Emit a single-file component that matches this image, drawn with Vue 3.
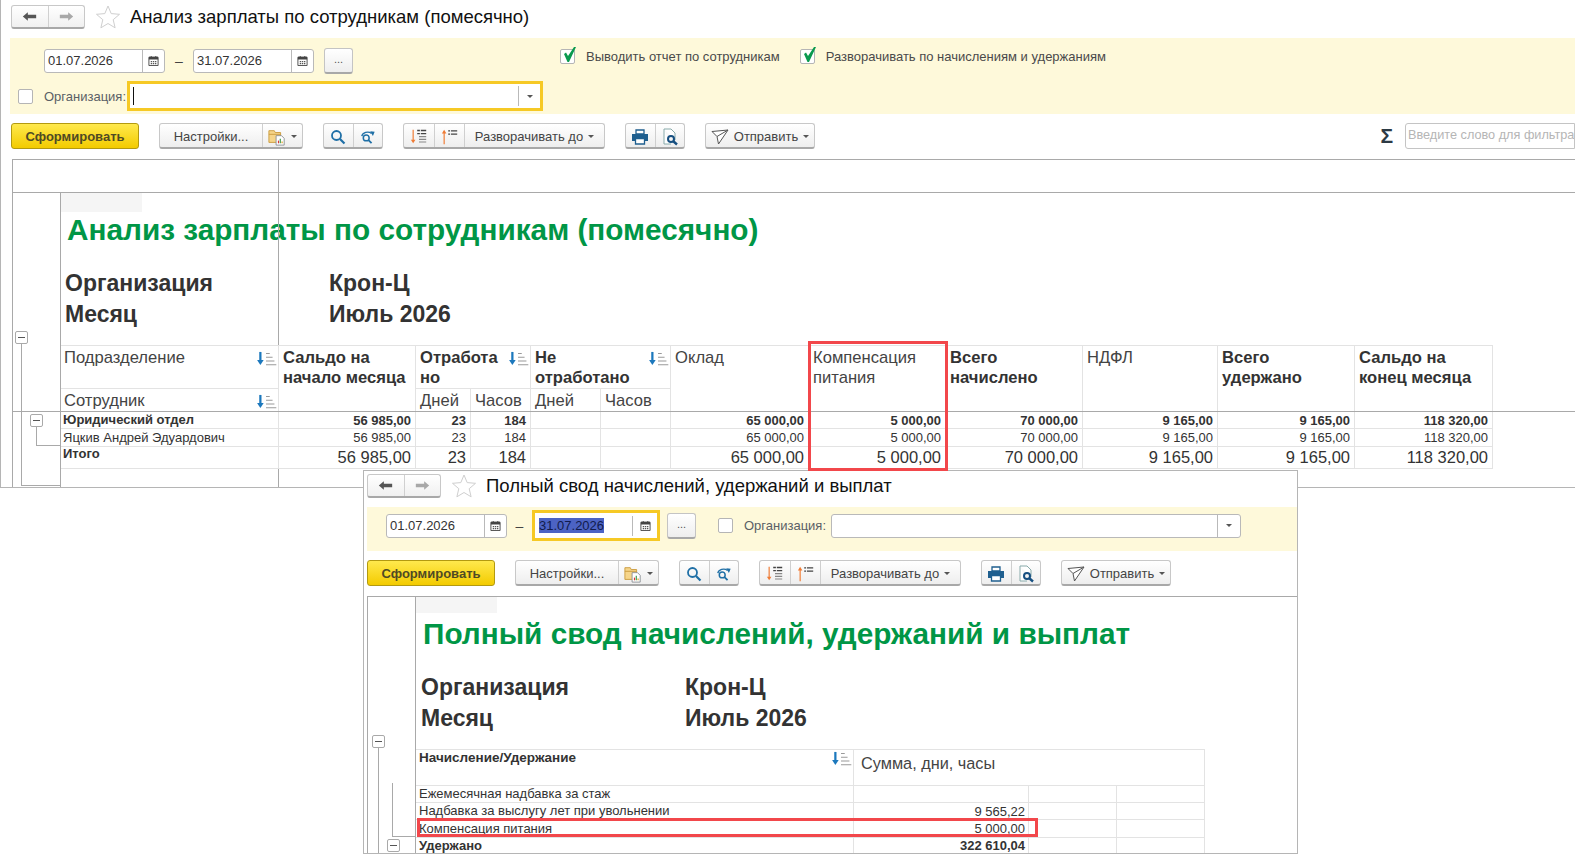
<script setup>
const windows = [
  { id: 'salary', title: 'Анализ зарплаты по сотрудникам (помесячно)' },
  { id: 'summary', title: 'Полный свод начислений, удержаний и выплат' }
]

const amounts = ['65 000,00', '5 000,00', '70 000,00', '9 165,00', '9 165,00', '118 320,00']

const salaryRows = [
  { name: 'Юридический отдел', cls: 'row-group' },
  { name: 'Яцкив Андрей Эдуардович', cls: 'row-item' },
  { name: 'Итого', cls: 'row-total' }
]

const summaryRows = [
  { name: 'Ежемесячная надбавка за стаж', sum: '', cls: 'row-a' },
  { name: 'Надбавка за выслугу лет при увольнении', sum: '9 565,22', cls: 'row-a' },
  { name: 'Компенсация питания', sum: '5 000,00', cls: 'row-b' },
  { name: 'Удержано', sum: '322 610,04', cls: 'row-c' }
]
</script>

<template>
  <svg class="sprite" aria-hidden="true">
    <symbol id="i-back" viewBox="0 0 18 12"><path d="M1 6l6-5v3h10v4H7v3z" /></symbol>
    <symbol id="i-star" viewBox="0 0 26 26">
      <path d="M13 2l3.2 7.6 8.3.7-6.3 5.4 1.9 8.1-7.1-4.3-7.1 4.3 1.9-8.1-6.3-5.4 8.3-.7z" fill="#fff" stroke="#cfcfcf" />
    </symbol>
    <symbol id="i-cal" viewBox="0 0 12 12">
      <path d="M1 2.5h10v9H1z" fill="#fff" stroke="#444" />
      <path d="M1 2h10v3H1zM3 1h1v2H3zM8 1h1v2H8z" fill="#444" />
      <path d="M3 6.5h1.5V8H3zM5.3 6.5h1.5V8H5.3zM7.6 6.5h1.5V8H7.6zM3 8.8h1.5v1.4H3zM5.3 8.8h1.5v1.4H5.3zM7.6 8.8h1.5v1.4H7.6z" fill="#555" />
    </symbol>
    <symbol id="i-check" viewBox="0 0 16 16"><path d="M3 7l2-1.500 2 3.500 6-9h2L8 15H6.500z" fill="#0a9a4e" /></symbol>
    <symbol id="i-folder" viewBox="0 0 20 20">
      <path d="M1 3h6l1 2h6v11H1z" fill="#f6d58a" stroke="#c99a3c" />
      <path d="M1 7h13" stroke="#c99a3c" />
      <path d="M9 8.500h6l3 3v7.500H9z" fill="#fff" stroke="#8a8f94" />
      <path d="M11 14h1.300v3H11z" fill="#d33" />
      <path d="M13 12h1.300v5H13z" fill="#3a9a4a" />
      <path d="M15 15h1.300v2H15z" fill="#e0a020" />
    </symbol>
    <symbol id="i-search" viewBox="0 0 16 16">
      <circle cx="6.500" cy="6.500" r="4.500" fill="none" stroke="#1f6fa6" stroke-width="1.800" />
      <path d="M10 10l4.500 4.500" stroke="#1f6fa6" stroke-width="2.200" />
    </symbol>
    <symbol id="i-research" viewBox="0 0 18 16">
      <circle cx="7" cy="9" r="3.300" fill="none" stroke="#1f6fa6" stroke-width="1.700" />
      <path d="M9.500 11.500l3.500 3.500" stroke="#1f6fa6" stroke-width="2" />
      <path d="M2 7c1-4 7-6 11-3" fill="none" stroke="#1f6fa6" stroke-width="1.500" />
      <path d="M11.500 1.500l5 .5-2 5z" fill="#1f6fa6" />
    </symbol>
    <symbol id="i-expand-down" viewBox="0 0 20 18">
      <path d="M3.500 1v13" stroke="#ef7b35" stroke-width="1.300" />
      <path d="M1 12h5l-2.500 4z" fill="#ef7b35" />
      <path d="M8 1h3v1.500H8zM12 1h6v1.500h-6zM8 4.500h3V6H8zM12 4.500h6V6h-6z" fill="#444" />
      <path d="M10 8h8v1.200h-8zM10 11h8v1.200h-8zM10 14h8v1.200h-8z" fill="#888" />
    </symbol>
    <symbol id="i-expand-up" viewBox="0 0 20 18">
      <path d="M3.500 3v14" stroke="#ef7b35" stroke-width="1.300" />
      <path d="M1 5h5L3.500 1z" fill="#ef7b35" />
      <path d="M8 1.500h2V3H8zM11 1.500h7V3h-7zM8 5h2v1.500H8zM11 5h7v1.500h-7z" fill="#444" />
    </symbol>
    <symbol id="i-print" viewBox="0 0 18 16">
      <path d="M5 1h8v4H5z" fill="#fff" stroke="#1f5f8f" stroke-width="1.300" />
      <path d="M1 5h16v7h-3V9H4v3H1z" fill="#1f5f8f" />
      <path d="M4.500 9.500h9v5.500h-9z" fill="#fff" stroke="#1f5f8f" stroke-width="1.300" />
    </symbol>
    <symbol id="i-preview" viewBox="0 0 18 18">
      <path d="M3 1h7l4 4v7M3 1v15h7" fill="#fff" stroke="#8aa" />
      <circle cx="10" cy="11" r="3" fill="none" stroke="#164f80" stroke-width="2" />
      <path d="M12 13l4 3.500" stroke="#164f80" stroke-width="2.400" />
    </symbol>
    <symbol id="i-send" viewBox="0 0 18 16">
      <path d="M1 2.500L17 1l-9.500 14L6 7.500zM6 7.500L17 1" fill="#fff" stroke="#555" />
    </symbol>
    <symbol id="i-sort" viewBox="0 0 22 16">
      <path d="M5 1v10" stroke="#1c78bd" stroke-width="2.400" />
      <path d="M1.500 9.500h7L5 15z" fill="#1c78bd" />
      <path d="M11 2h4v1.300h-4zM11 6h7v1.300h-7zM11 10h9v1.300h-9zM11 14h11v1.300H11z" fill="#9a9a9a" />
    </symbol>
  </svg>

  <div class="desktop">
    <section v-for="win in windows" :key="win.id" class="window" :class="win.id">
      <header class="head">
        <div class="nav">
          <button class="nav-btn"><svg class="nav-ico back"><use href="#i-back" /></svg></button>
          <button class="nav-btn"><svg class="nav-ico fwd"><use href="#i-back" /></svg></button>
        </div>
        <svg class="star"><use href="#i-star" /></svg>
        <h1 class="title">{{ win.title }}</h1>
      </header>

      <div v-if="win.id === 'salary'" class="panel">
        <div class="panel-row">
          <div class="date">
            <span class="date-val">01.07.2026</span>
            <span class="date-btn"><svg class="cal"><use href="#i-cal" /></svg></span>
          </div>
          <span class="dash">–</span>
          <div class="date">
            <span class="date-val">31.07.2026</span>
            <span class="date-btn"><svg class="cal"><use href="#i-cal" /></svg></span>
          </div>
          <button class="more">...</button>
          <label class="check first-check">
            <span class="box"><svg class="tick"><use href="#i-check" /></svg></span>
            Выводить отчет по сотрудникам
          </label>
          <label class="check second-check">
            <span class="box"><svg class="tick"><use href="#i-check" /></svg></span>
            Разворачивать по начислениям и удержаниям
          </label>
        </div>
        <div class="panel-row org-row">
          <span class="box"></span>
          <span class="org-label">Организация:</span>
          <div class="org-input focused">
            <span class="cursor"></span>
            <span class="org-btn"><i class="caret"></i></span>
          </div>
        </div>
      </div>

      <div v-else class="panel">
        <div class="panel-row">
          <div class="date">
            <span class="date-val">01.07.2026</span>
            <span class="date-btn"><svg class="cal"><use href="#i-cal" /></svg></span>
          </div>
          <span class="dash">–</span>
          <div class="date focused">
            <span class="date-val"><mark class="selected">31.07.2026</mark></span>
            <span class="date-btn"><svg class="cal"><use href="#i-cal" /></svg></span>
          </div>
          <button class="more">...</button>
          <span class="box org-box"></span>
          <span class="org-label">Организация:</span>
          <div class="org-input">
            <span class="org-btn"><i class="caret"></i></span>
          </div>
        </div>
      </div>

      <div class="toolbar">
        <button class="btn primary">Сформировать</button>
        <div class="group settings">
          <button class="seg grow">Настройки...</button>
          <button class="seg folder-seg"><svg class="ico18"><use href="#i-folder" /></svg><i class="caret"></i></button>
        </div>
        <div class="group">
          <button class="seg ico-seg"><svg class="ico16"><use href="#i-search" /></svg></button>
          <button class="seg ico-seg"><svg class="ico16"><use href="#i-research" /></svg></button>
        </div>
        <div class="group expand">
          <button class="seg ico-seg"><svg class="ico18"><use href="#i-expand-down" /></svg></button>
          <button class="seg ico-seg"><svg class="ico18"><use href="#i-expand-up" /></svg></button>
          <button class="seg grow">Разворачивать до <i class="caret"></i></button>
        </div>
        <div class="group">
          <button class="seg ico-seg"><svg class="ico18"><use href="#i-print" /></svg></button>
          <button class="seg ico-seg"><svg class="ico18"><use href="#i-preview" /></svg></button>
        </div>
        <div class="group send">
          <button class="seg grow"><svg class="ico18"><use href="#i-send" /></svg> Отправить <i class="caret"></i></button>
        </div>
        <template v-if="win.id === 'salary'">
          <span class="sigma">Σ</span>
          <div class="filter">Введите слово для фильтра</div>
        </template>
      </div>

      <div class="report">
        <div v-if="win.id === 'salary'" class="report-top"></div>
        <div class="report-body">
          <div class="gutter"></div>
          <div class="sheet">
            <div class="stub"></div>
            <h2 class="sheet-title">{{ win.title }}</h2>
            <dl class="meta">
              <dt>Организация</dt><dd>Крон-Ц</dd>
              <dt>Месяц</dt><dd>Июль 2026</dd>
            </dl>

            <table v-if="win.id === 'salary'" class="grid salary-grid">
              <colgroup>
                <col class="w218" /><col class="w137" /><col class="w55" /><col class="w60" /><col class="w70" /><col class="w70" />
                <col class="w138" /><col class="w137" /><col class="w137" /><col class="w135" /><col class="w137" /><col class="w138" />
              </colgroup>
              <thead>
                <tr class="head-a">
                  <th class="first"><div class="sortable">Подразделение<svg class="sort"><use href="#i-sort" /></svg></div></th>
                  <th rowspan="2" class="strong">Сальдо на<br />начало месяца</th>
                  <th colspan="2" class="strong"><div class="sortable">Отработа<svg class="sort"><use href="#i-sort" /></svg></div>но</th>
                  <th colspan="2" class="strong"><div class="sortable">Не<svg class="sort"><use href="#i-sort" /></svg></div>отработано</th>
                  <th rowspan="2">Оклад</th>
                  <th rowspan="2">Компенсация<br />питания</th>
                  <th rowspan="2" class="strong">Всего<br />начислено</th>
                  <th rowspan="2">НДФЛ</th>
                  <th rowspan="2" class="strong">Всего<br />удержано</th>
                  <th rowspan="2" class="strong">Сальдо на<br />конец месяца</th>
                </tr>
                <tr class="head-b">
                  <th class="first"><div class="sortable">Сотрудник<svg class="sort"><use href="#i-sort" /></svg></div></th>
                  <th>Дней</th><th>Часов</th><th>Дней</th><th>Часов</th>
                </tr>
              </thead>
              <tbody>
                <tr v-for="row in salaryRows" :key="row.name" :class="row.cls">
                  <td class="name">{{ row.name }}</td>
                  <td class="num">56 985,00</td>
                  <td class="num">23</td>
                  <td class="num">184</td>
                  <td></td>
                  <td></td>
                  <td v-for="(a, i) in amounts" :key="i" class="num">{{ a }}</td>
                </tr>
              </tbody>
            </table>

            <table v-else class="grid summary-grid">
              <colgroup>
                <col class="w438" /><col class="w175" /><col class="w88" /><col class="w88" />
              </colgroup>
              <thead>
                <tr class="head-s">
                  <th class="strong small"><div class="sortable">Начисление/Удержание<svg class="sort"><use href="#i-sort" /></svg></div></th>
                  <th colspan="3" class="amount-head">Сумма, дни, часы</th>
                </tr>
              </thead>
              <tbody>
                <tr v-for="row in summaryRows" :key="row.name" :class="row.cls">
                  <td class="name">{{ row.name }}</td>
                  <td class="num">{{ row.sum }}</td>
                  <td></td>
                  <td></td>
                </tr>
              </tbody>
            </table>
          </div>
        </div>

        <template v-if="win.id === 'salary'">
          <span class="divider"></span>
          <span class="header-rule"></span>
          <span class="toggle t1"></span>
          <span class="tree-v v1"></span>
          <span class="tree-h h1"></span>
          <span class="toggle t2"></span>
          <span class="tree-v v2"></span>
          <span class="tree-h h2"></span>
          <span class="marker salary-marker"></span>
        </template>
        <template v-else>
          <span class="toggle t3"></span>
          <span class="tree-v v3"></span>
          <span class="tree-v v4"></span>
          <span class="tree-h h4"></span>
          <span class="toggle t4"></span>
          <span class="marker summary-marker"></span>
        </template>
      </div>
    </section>
  </div>
</template>

<style>
html,
body {
  background: #fff;
  overflow: hidden;
}
</style>

<style scoped>
.sprite {
  position: absolute;
  width: 0;
  height: 0;
}

.desktop {
  position: relative;
  width: 1575px;
  height: 854px;
  overflow: hidden;
  font-family: 'Liberation Sans', Arial, sans-serif;
  color: #333;
}

.window {
  position: absolute;
  box-sizing: border-box;
  display: flex;
  flex-direction: column;
  background: #fff;
  overflow: hidden;
}

.salary {
  left: 0;
  top: 0;
  width: 1575px;
  height: 488px;
  border-left: 1px solid #b5b5b5;
  border-bottom: 1px solid #b5b5b5;
}

.summary {
  left: 363px;
  top: 470px;
  width: 935px;
  height: 384px;
  border: 1px solid #b5b5b5;
  z-index: 1;
}

.head {
  flex: none;
  display: flex;
  align-items: center;
  box-sizing: border-box;
}

.salary .head {
  height: 38px;
  padding: 4px 0 9px 10px;
}

.summary .head {
  height: 36px;
  padding: 2px 0 8px 3px;
}

.nav {
  display: flex;
  width: 74px;
  height: 24px;
  box-sizing: border-box;
  border: 1px solid #c8c8c8;
  border-bottom: 2px solid #a8a8a8;
  border-radius: 3px;
  background: linear-gradient(#fff, #f0f0f0);
}

.nav-btn {
  flex: 1;
  padding: 0;
  border: 0;
  background: none;
  display: flex;
  align-items: center;
  justify-content: center;
}

.nav-btn + .nav-btn {
  border-left: 1px solid #d0d0d0;
}

.nav-ico {
  width: 15px;
  height: 11px;
}

.back {
  fill: #555;
}

.fwd {
  fill: #a8a8a8;
  transform: scaleX(-1);
}

.star {
  width: 26px;
  height: 26px;
  margin-left: 10px;
}

.title {
  margin: 0 0 0 9px;
  font-size: 18.500px;
  font-weight: 400;
  color: #111;
  white-space: nowrap;
}

.panel {
  flex: none;
  background: #fef9da;
  display: flex;
  flex-direction: column;
  box-sizing: border-box;
}

.salary .panel {
  margin-left: 9px;
  height: 76px;
  padding: 10px 0 0 8px;
}

.summary .panel {
  margin-left: 3px;
  height: 44px;
  padding: 3px 0 0 19px;
}

.panel-row {
  display: flex;
  align-items: center;
}

.salary .panel-row:first-child {
  padding-left: 26px;
  height: 25px;
}

.summary .panel-row {
  height: 31px;
}

.org-row {
  margin-top: 8px;
  height: 30px;
}

.date {
  display: flex;
  align-items: center;
  box-sizing: border-box;
  width: 121px;
  height: 24px;
  background: #fff;
  border: 1px solid #b9b9b9;
  border-radius: 3px;
  font-size: 13px;
  color: #333;
}

.date.focused {
  width: 128px;
  height: 31px;
  border: 3px solid #f6c925;
  border-radius: 0;
}

.date-val {
  flex: 1;
  padding: 1px 0 0 3px;
  line-height: 20px;
}

.date.focused .date-val {
  padding-left: 4px;
}

.selected {
  background: #4c63c4;
  color: #111b4d;
}

.date-btn {
  width: 21px;
  height: 100%;
  border-left: 1px solid #b9b9b9;
  display: flex;
  align-items: center;
  justify-content: center;
  box-sizing: content-box;
}

.date.focused .date-btn {
  width: 24px;
  height: 20px;
}

.cal {
  width: 11px;
  height: 11px;
}

.dash {
  width: 28px;
  text-align: center;
  font-size: 14px;
  color: #444;
}

.summary .dash {
  width: 25px;
}

.more {
  width: 29px;
  height: 26px;
  margin-left: 10px;
  padding: 0 0 2px;
  border: 1px solid #c4c4c4;
  border-bottom: 2px solid #a8a8a8;
  border-radius: 3px;
  background: linear-gradient(#fff, #eee);
  font: 11px 'Liberation Sans', Arial, sans-serif;
  color: #555;
}

.summary .more {
  margin-left: 7px;
}

.check {
  display: flex;
  align-self: flex-start;
  align-items: center;
  gap: 11px;
  margin-top: 1px;
  font-size: 13px;
  color: #4a4a4a;
  white-space: nowrap;
}

.first-check {
  margin-left: 207px;
}

.second-check {
  margin-left: 20px;
}

.box {
  position: relative;
  display: block;
  box-sizing: border-box;
  width: 15px;
  height: 15px;
  flex: none;
  background: #fff;
  border: 1px solid #b5b5b5;
  border-radius: 2px;
}

.tick {
  position: absolute;
  left: 0;
  top: -3px;
  width: 16px;
  height: 16px;
}

.org-box {
  margin-left: 22px;
}

.org-label {
  margin-left: 11px;
  font-size: 13px;
  color: #5a6066;
  white-space: nowrap;
}

.salary .org-label {
  width: 83px;
}

.summary .org-label {
  width: 87px;
}

.org-input {
  position: relative;
  display: flex;
  justify-content: flex-end;
  align-items: center;
  box-sizing: border-box;
  width: 410px;
  height: 24px;
  background: #fff;
  border: 1px solid #b9b9b9;
  border-radius: 3px;
}

.org-input.focused {
  width: 416px;
  height: 30px;
  border: 3px solid #f6c925;
  border-radius: 0;
}

.cursor {
  position: absolute;
  left: 3px;
  top: 3px;
  width: 1px;
  height: 18px;
  background: #111;
}

.org-btn {
  width: 22px;
  height: 100%;
  border-left: 1px solid #b9b9b9;
  display: flex;
  align-items: center;
  justify-content: center;
}

.org-input.focused .org-btn {
  height: 20px;
  width: 21px;
}

.caret {
  display: inline-block;
  width: 0;
  height: 0;
  border: 3px solid transparent;
  border-top: 3px solid #555;
  border-bottom: 0;
  vertical-align: middle;
}

.toolbar {
  flex: none;
  display: flex;
  align-items: stretch;
  gap: 20px;
  height: 26px;
  margin-top: 9px;
}

.salary .toolbar {
  padding-left: 10px;
}

.summary .toolbar {
  padding-left: 3px;
}

.btn,
.seg {
  font: 13px 'Liberation Sans', Arial, sans-serif;
  color: #444;
  white-space: nowrap;
}

.primary {
  width: 128px;
  padding: 0;
  border: 1px solid #b39a10;
  border-radius: 3px;
  background: linear-gradient(#ffe94d, #f3cb00);
  color: #4f4a24;
  font-weight: 700;
}

.group {
  display: flex;
  width: 60px;
  box-sizing: border-box;
  border: 1px solid #c8c8c8;
  border-bottom: 2px solid #a8a8a8;
  border-radius: 3px;
  background: linear-gradient(#fff, #eee);
}

.settings {
  width: 144px;
}

.expand {
  width: 202px;
}

.send {
  width: 110px;
}

.seg {
  display: flex;
  align-items: center;
  justify-content: center;
  gap: 5px;
  padding: 2px 0 0;
  border: 0;
  background: none;
}

.seg + .seg {
  border-left: 1px solid #cfcfcf;
}

.grow {
  flex: 1;
}

.ico-seg {
  width: 30px;
}

.folder-seg {
  width: 40px;
}

.ico16 {
  width: 16px;
  height: 16px;
}

.ico18 {
  width: 18px;
  height: 18px;
}

.sigma {
  margin-left: auto;
  font-size: 21px;
  font-weight: 700;
  line-height: 26px;
  color: #2c3a44;
}

.filter {
  width: 170px;
  margin-left: -8px;
  box-sizing: border-box;
  padding: 4px 0 0 2px;
  border: 1px solid #c4c4c4;
  border-radius: 3px 0 0 3px;
  font-size: 12.700px;
  color: #b5b5b5;
  white-space: nowrap;
  overflow: hidden;
}

.report {
  position: relative;
  flex: 1;
  min-height: 0;
  border-top: 1px solid #a9a9a9;
  margin-top: 10px;
}

.salary .report {
  margin-left: 11px;
  border-left: 1px solid #a9a9a9;
}

.summary .report {
  margin-left: 3px;
  border-left: 1px solid #a9a9a9;
}

.report-top {
  box-sizing: border-box;
  height: 33px;
  border-bottom: 1px solid #a9a9a9;
}

.report-body {
  display: flex;
}

.gutter {
  width: 47px;
  flex: none;
}

.sheet {
  flex: 1;
  min-height: 400px;
  border-left: 1px solid #a9a9a9;
}

.stub {
  width: 81px;
  height: 19px;
  background: #f5f5f5;
}

.summary .stub {
  height: 16px;
  margin-bottom: 3px;
}

.sheet-title {
  margin: 0;
  padding-left: 6px;
  font-size: 29.750px;
  line-height: 36px;
  font-weight: 700;
  color: #009646;
  white-space: nowrap;
}

.summary .sheet-title {
  padding-left: 7px;
}

.meta {
  display: grid;
  grid-template-columns: 264px auto;
  grid-auto-rows: 31px;
  align-items: center;
  margin: 20px 0 15px;
  padding-left: 4px;
  font-size: 23px;
  font-weight: 700;
  color: #333;
}

.summary .meta {
  padding-left: 5px;
}

.meta dd {
  margin: 0;
}

.grid {
  position: relative;
  z-index: 1;
  table-layout: fixed;
  border-collapse: separate;
  border-spacing: 0;
  background: #fff;
  border-top: 1px solid #e3e3e3;
}

.salary-grid {
  width: 1432px;
}

.summary-grid {
  width: 789px;
}

.w55 { width: 55px; }
.w60 { width: 60px; }
.w70 { width: 70px; }
.w88 { width: 88px; }
.w135 { width: 135px; }
.w137 { width: 137px; }
.w138 { width: 138px; }
.w175 { width: 175px; }
.w218 { width: 218px; }
.w438 { width: 438px; }

.grid th,
.grid td {
  box-sizing: border-box;
  padding: 0;
  border-right: 1px solid #e3e3e3;
  border-bottom: 1px solid #e3e3e3;
  overflow: hidden;
  white-space: nowrap;
}

.grid th {
  padding: 2px 1px 0 4px;
  vertical-align: top;
  text-align: left;
  font-size: 16.600px;
  line-height: 20px;
  font-weight: 400;
  color: #444;
}

.grid th.first {
  padding-left: 3px;
}

.grid th.strong {
  font-weight: 700;
  color: #333;
}

.grid th.small {
  padding: 0 1px 0 3px;
  font-size: 13.500px;
  line-height: 16px;
}

.grid th.amount-head {
  padding-left: 7px;
  font-size: 16.300px;
  line-height: 22px;
}

.head-a {
  height: 43px;
}

.head-b {
  height: 23px;
}

.head-s {
  height: 36px;
}

.sortable {
  display: flex;
  justify-content: space-between;
  align-items: center;
}

.sort {
  width: 22px;
  height: 15px;
  flex: none;
}

.name {
  padding-left: 2px !important;
  font-size: 13px;
  line-height: 14px;
  vertical-align: middle;
}

.summary-grid .name {
  padding-left: 3px !important;
}

.num {
  padding-right: 4px !important;
  text-align: right;
  font-size: 13px;
}

.summary-grid .num {
  padding-right: 3px !important;
}

.row-group {
  height: 17px;
  font-weight: 700;
}

.row-item {
  height: 18px;
}

.row-total {
  height: 22px;
  font-weight: 700;
}

.row-total .num {
  font-size: 16.500px;
  font-weight: 400;
}

.row-total .name {
  vertical-align: top;
}

.row-a {
  height: 17px;
}

.row-b {
  height: 18px;
}

.row-c {
  height: 15px;
  font-weight: 700;
}

.divider {
  position: absolute;
  left: 265px;
  top: 0;
  bottom: 0;
  width: 1px;
  background: #a9a9a9;
}

.header-rule {
  position: absolute;
  z-index: 2;
  left: -1px;
  right: 0;
  top: 251px;
  height: 1px;
  background: #a9a9a9;
}

.toggle {
  position: absolute;
  box-sizing: border-box;
  width: 13px;
  height: 13px;
  background: #fff;
  border: 1px solid #a9a9a9;
  border-radius: 2px;
}

.toggle::after {
  content: '';
  position: absolute;
  left: 2px;
  right: 2px;
  top: 5px;
  height: 1px;
  background: #555;
}

.tree-v,
.tree-h {
  position: absolute;
  background: #a9a9a9;
}

.tree-v {
  width: 1px;
}

.tree-h {
  height: 1px;
}

.t1 { left: 2px; top: 171px; }
.v1 { left: 8px; top: 184px; height: 141px; }
.h1 { left: 8px; top: 325px; width: 39px; }
.t2 { left: 17px; top: 254px; z-index: 3; }
.v2 { left: 23px; top: 267px; height: 18px; }
.h2 { left: 23px; top: 285px; width: 24px; }

.t3 { left: 4px; top: 138px; }
.v3 { left: 10px; top: 151px; height: 110px; }
.v4 { left: 24px; top: 186px; height: 53px; }
.h4 { left: 24px; top: 239px; width: 23px; }
.t4 { left: 19px; top: 242px; }

.marker {
  position: absolute;
  z-index: 4;
  box-sizing: border-box;
  border: 3px solid #f2474b;
}

.salary-marker {
  left: 795px;
  top: 181px;
  width: 140px;
  height: 130px;
}

.summary-marker {
  left: 49px;
  top: 221px;
  width: 621px;
  height: 19px;
}
</style>
